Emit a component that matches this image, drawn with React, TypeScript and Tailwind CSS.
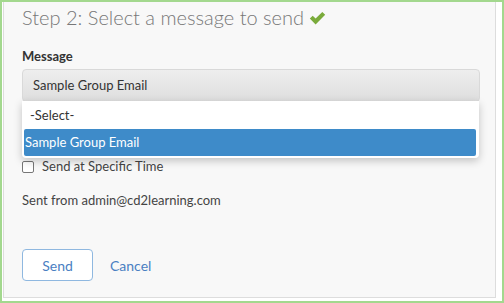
import React from "react";

export default function App() {
  return (
    <div className="w-[504px] h-[303px] border-2 border-[#a3d88e] bg-white flex font-['Lato',sans-serif]">
      <div className="flex-1 ml-px mr-[6px] mb-[3px] border-x border-b border-[#dddddd] bg-[#f8f8f8] pl-[18px] pr-[15px] pt-px">
        <div className="flex items-center text-[20px] leading-[24px] font-light text-[#777777] mt-[2px]">
          <span>Step 2: Select a message to send</span>
          <svg className="ml-[5px] mt-[1px]" width="17" height="14" viewBox="0 0 17 14">
            <path d="M0.8 7.6 L3.7 4.7 L6.6 7.6 L13.3 0.9 L16.2 3.8 L6.6 13.4 Z" fill="#7aab3b" />
          </svg>
        </div>
        <div className="mt-[18px] text-[13px] leading-[18px] font-bold text-[#333333]">Message</div>
        <div className="relative mt-[4px]">
          <div className="h-[33px] rounded-[4px] border border-[#d9d9d9] bg-gradient-to-b from-[#eeeeee] to-[#dedede] flex items-center pl-[10px] text-[13px] text-[#333333]">
            Sample Group Email
          </div>
          <div className="absolute left-0 right-px top-[32px] bg-white rounded-b-[4px] shadow-[0_3px_8px_rgba(0,0,0,0.22)] px-[2px] pb-[2px] pt-px z-10">
            <div className="h-[27px] flex items-center pl-[6px] text-[13px] text-[#333333]">-Select-</div>
            <div className="h-[27px] flex items-center pl-[1px] mr-px rounded-[2px] bg-[#3e8bc9] text-[13px] text-white">
              Sample Group Email
            </div>
          </div>
        </div>
        <div className="mt-[56px] flex items-center h-[18px] text-[13px] text-[#444444]">
          <span className="w-[12px] h-[12px] rounded-[2px] border border-[#777777] bg-white"></span>
          <span className="ml-[8px]">Send at Specific Time</span>
        </div>
        <div className="mt-[15px] h-[18px] leading-[18px] text-[13px] text-[#444444]">Sent from admin@cd2learning.com</div>
        <div className="mt-[40px] flex items-center">
          <button className="w-[71px] h-[32px] rounded-[4px] border border-[#8fb8e0] bg-white text-[14px] text-[#4a80c2]">Send</button>
          <span className="ml-[17px] text-[14px] text-[#4a80c2]">Cancel</span>
        </div>
      </div>
    </div>
  );
}
